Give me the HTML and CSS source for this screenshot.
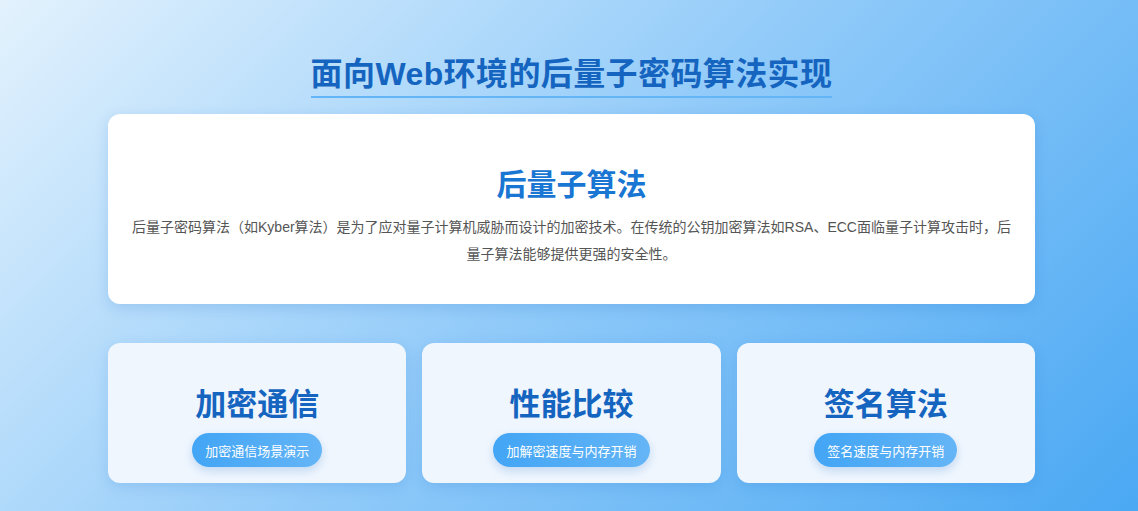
FILE: index.html
```html
<!DOCTYPE html>
<html lang="zh-CN">
<head>
    <meta charset="UTF-8">
    <meta name="viewport" content="width=device-width, initial-scale=1.0">
    <title>面向Web环境的后量子密码算法实现</title>
    <link rel="stylesheet" href="styles.css">
</head>
<body>
    <div class="page">
        <header class="header">
            <h1 class="title">面向Web环境的后量子密码算法实现</h1>
        </header>

        <section class="intro">
            <h2>后量子算法</h2>
            <p>后量子密码算法（如Kyber算法）是为了应对量子计算机威胁而设计的加密技术。在传统的公钥加密算法如RSA、ECC面临量子计算攻击时，后量子算法能够提供更强的安全性。</p>
        </section>

        <div class="features">
            <div class="feature">
                <h3>加密通信</h3>
                <button class="pill">加密通信场景演示</button>
            </div>
            <div class="feature">
                <h3>性能比较</h3>
                <button class="pill">加解密速度与内存开销</button>
            </div>
            <div class="feature">
                <h3>签名算法</h3>
                <button class="pill">签名速度与内存开销</button>
            </div>
        </div>
    </div>
</body>
</html>
```

FILE: styles.css
```css
* {
    box-sizing: border-box;
}
html, body {
    height: 100%;
}
body {
    margin: 0;
    padding: 0 0 0 5px;
    font-family: 'Liberation Sans', 'Noto Sans CJK SC', sans-serif;
    color: #333;
    background: linear-gradient(135deg, #e3f2fd 0%, #90caf9 50%, #4aa8f3 100%);
    overflow: hidden;
}
.page {
    width: 927px;
    margin: 0 auto;
    padding-top: 55px;
}
.header {
    text-align: center;
    margin-bottom: 16px;
}
.title {
    display: inline-block;
    margin: 0;
    font-size: 32px;
    line-height: 38px;
    letter-spacing: 0.4px;
    font-weight: bold;
    color: #1565c0;
    padding-bottom: 3px;
    border-bottom: 2px solid #64b5f6;
}
.intro {
    background: #fff;
    border-radius: 12px;
    padding: 53px 22px 36px;
    text-align: center;
    box-shadow: 0 4px 14px rgba(21, 101, 192, 0.18);
}
.intro h2 {
    margin: 0 0 11px;
    font-size: 30px;
    line-height: 36px;
    color: #1976d2;
}
.intro p {
    margin: 0;
    font-size: 14px;
    line-height: 27px;
    color: #555;
}
.features {
    display: grid;
    grid-template-columns: repeat(3, 1fr);
    gap: 16px;
    margin-top: 39px;
}
.feature {
    background: #eff6fe;
    border-radius: 12px;
    padding: 43px 16px 16px;
    text-align: center;
    box-shadow: 0 4px 14px rgba(21, 101, 192, 0.15);
}
.feature h3 {
    margin: 0 0 9px;
    font-size: 31px;
    line-height: 38px;
    color: #1565c0;
}
.pill {
    height: 34px;
    padding: 0 13px;
    border: none;
    border-radius: 17px;
    background: linear-gradient(90deg, #42a5f5, #64b5f6);
    color: #fff;
    font-family: inherit;
    font-size: 13px;
    cursor: pointer;
    box-shadow: 0 4px 10px rgba(21, 101, 192, 0.2);
}
```
